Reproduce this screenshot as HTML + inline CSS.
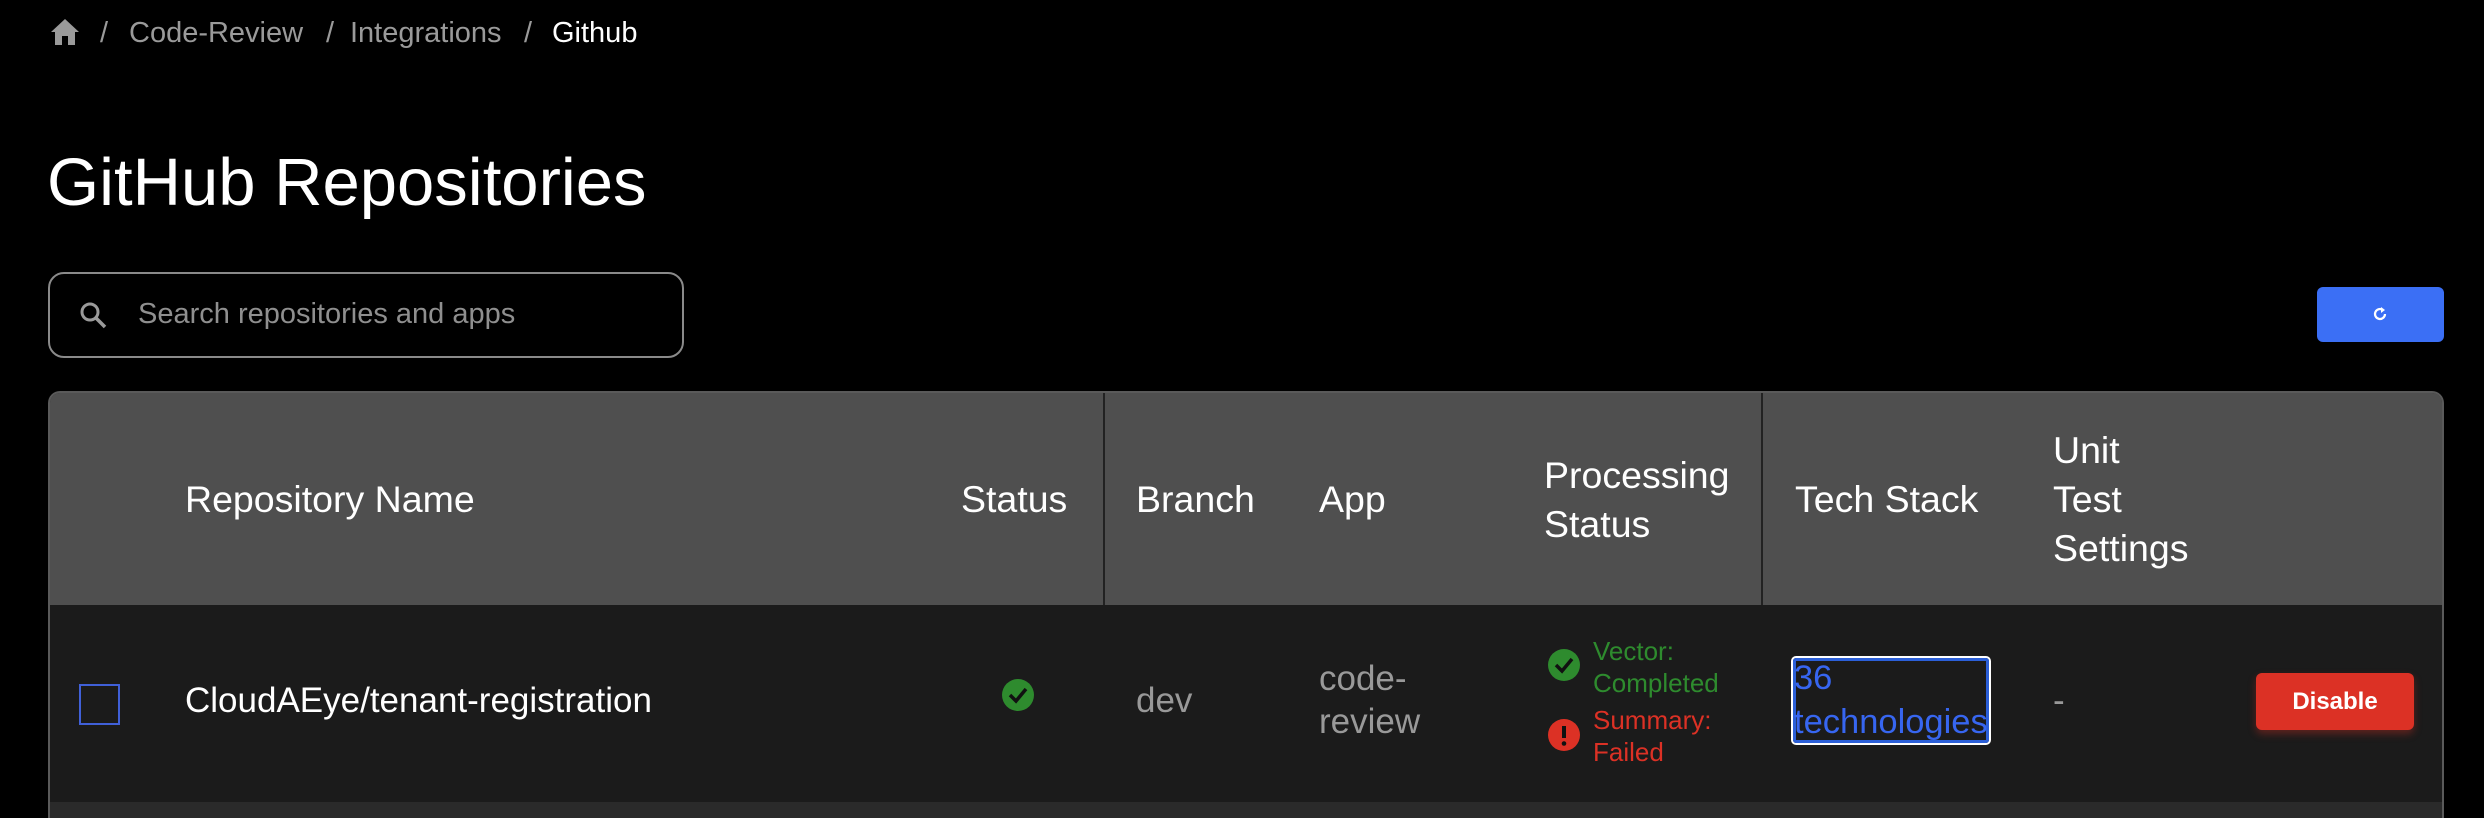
<!DOCTYPE html>
<html><head><meta charset="utf-8"><style>
*{box-sizing:border-box;margin:0;padding:0}
body{width:2484px;height:818px;background:#000;font-family:"Liberation Sans",sans-serif;position:relative;overflow:hidden;color:#fff}
.a{position:absolute;white-space:nowrap}
.bc{top:17px;font-size:29px;color:#9a9a9a}
.h{font-size:37.5px;color:#fff;line-height:49px}
</style></head><body>
<svg class="a" style="left:50px;top:18px" width="30" height="28" viewBox="0 0 30 28"><path d="M15 1 L1 14 H5 V27 H12 V18 H18 V27 H25 V14 H29 Z" fill="#9a9a9a"/></svg>
<div class="a bc" style="left:100px">/</div>
<div class="a bc" style="left:129px">Code-Review</div>
<div class="a bc" style="left:326px">/</div>
<div class="a bc" style="left:350px">Integrations</div>
<div class="a bc" style="left:524px">/</div>
<div class="a bc" style="left:552px;color:#fff">Github</div>
<div class="a" style="left:47px;top:144px;font-size:67px;color:#fff">GitHub Repositories</div>
<div class="a" style="left:48px;top:272px;width:636px;height:86px;border:2px solid #8a8a8a;border-radius:16px"></div>
<svg class="a" style="left:78px;top:300px" width="30" height="30" viewBox="0 0 30 30"><circle cx="12" cy="12" r="8" stroke="#9a9a9a" stroke-width="3" fill="none"/><path d="M18 18 L27 27" stroke="#9a9a9a" stroke-width="3.5"/></svg>
<div class="a" style="left:138px;top:298px;font-size:29px;color:#8f8f8f">Search repositories and apps</div>
<div class="a" style="left:2317px;top:287px;width:127px;height:55px;background:#3b6ff5;border-radius:6px"></div>
<svg class="a" style="left:2371px;top:305px" width="18" height="18" viewBox="0 0 18 18"><path d="M14 9 A5 5 0 1 1 12 5" stroke="#fff" stroke-width="2.2" fill="none"/><path d="M10 2 L14 5 L10 8 Z" fill="#fff"/></svg>
<div class="a" style="left:48px;top:391px;width:2396px;height:427px;border:2px solid #5a5a5a;border-bottom:none;border-radius:12px 12px 0 0;overflow:hidden;background:#2a2a2a">
<div style="position:absolute;left:0;top:0;width:100%;height:212px;background:#4f4f4f"></div>
<div style="position:absolute;left:0;top:212px;width:100%;height:197px;background:#1b1b1b"></div>
<div style="position:absolute;left:1053px;top:0;width:2px;height:212px;background:#222"></div>
<div style="position:absolute;left:1711px;top:0;width:2px;height:212px;background:#222"></div>
</div>
<div class="a h" style="left:185px;top:475px">Repository Name</div>
<div class="a h" style="left:961px;top:475px">Status</div>
<div class="a h" style="left:1136px;top:475px">Branch</div>
<div class="a h" style="left:1319px;top:475px">App</div>
<div class="a h" style="left:1544px;top:451px">Processing<br>Status</div>
<div class="a h" style="left:1795px;top:475px">Tech Stack</div>
<div class="a h" style="left:2053px;top:426px">Unit<br>Test<br>Settings</div>
<div class="a" style="left:79px;top:684px;width:41px;height:41px;border:2px solid #4060d8"></div>
<div class="a" style="left:185px;top:681px;font-size:35px;color:#fff">CloudAEye/tenant-registration</div>
<svg class="a" style="left:1001px;top:678px" width="34" height="34" viewBox="0 0 34 34"><circle cx="17" cy="17" r="16" fill="#2e8b2e"/><path d="M9 17 L15 23 L25 11" stroke="#111" stroke-width="3.5" fill="none"/></svg>
<div class="a" style="left:1136px;top:681px;font-size:35px;color:#999">dev</div>
<div class="a" style="left:1319px;top:657px;font-size:35px;color:#999;line-height:43px">code-<br>review</div>
<svg class="a" style="left:1547px;top:648px" width="34" height="34" viewBox="0 0 34 34"><circle cx="17" cy="17" r="16" fill="#2e8b2e"/><path d="M9 17 L15 23 L25 11" stroke="#111" stroke-width="3.5" fill="none"/></svg>
<div class="a" style="left:1593px;top:635px;font-size:26px;color:#2e8b2e;line-height:32px">Vector:<br>Completed</div>
<svg class="a" style="left:1547px;top:718px" width="34" height="34" viewBox="0 0 34 34"><circle cx="17" cy="17" r="16" fill="#dc3125"/><path d="M17 8 V20" stroke="#111" stroke-width="4"/><circle cx="17" cy="25.5" r="2.3" fill="#111"/></svg>
<div class="a" style="left:1593px;top:704px;font-size:26px;color:#dc3125;line-height:32px">Summary:<br>Failed</div>
<div class="a" style="left:1791px;top:656px;width:200px;height:89px;border:2px solid #fff;border-radius:5px"><div style="position:absolute;inset:0;border:3px solid #2b5fd8;border-radius:3px"></div></div>
<div class="a" style="left:1794px;top:656px;font-size:34.5px;color:#3766f0;line-height:44px">36<br>technologies</div>
<div class="a" style="left:2053px;top:681px;font-size:35px;color:#999">-</div>
<div class="a" style="left:2256px;top:673px;width:158px;height:57px;background:#dc3125;border-radius:6px;box-shadow:0 4px 8px rgba(220,49,37,.35);font-size:24px;font-weight:bold;text-align:center;line-height:57px;color:#fff">Disable</div>
</body></html>
